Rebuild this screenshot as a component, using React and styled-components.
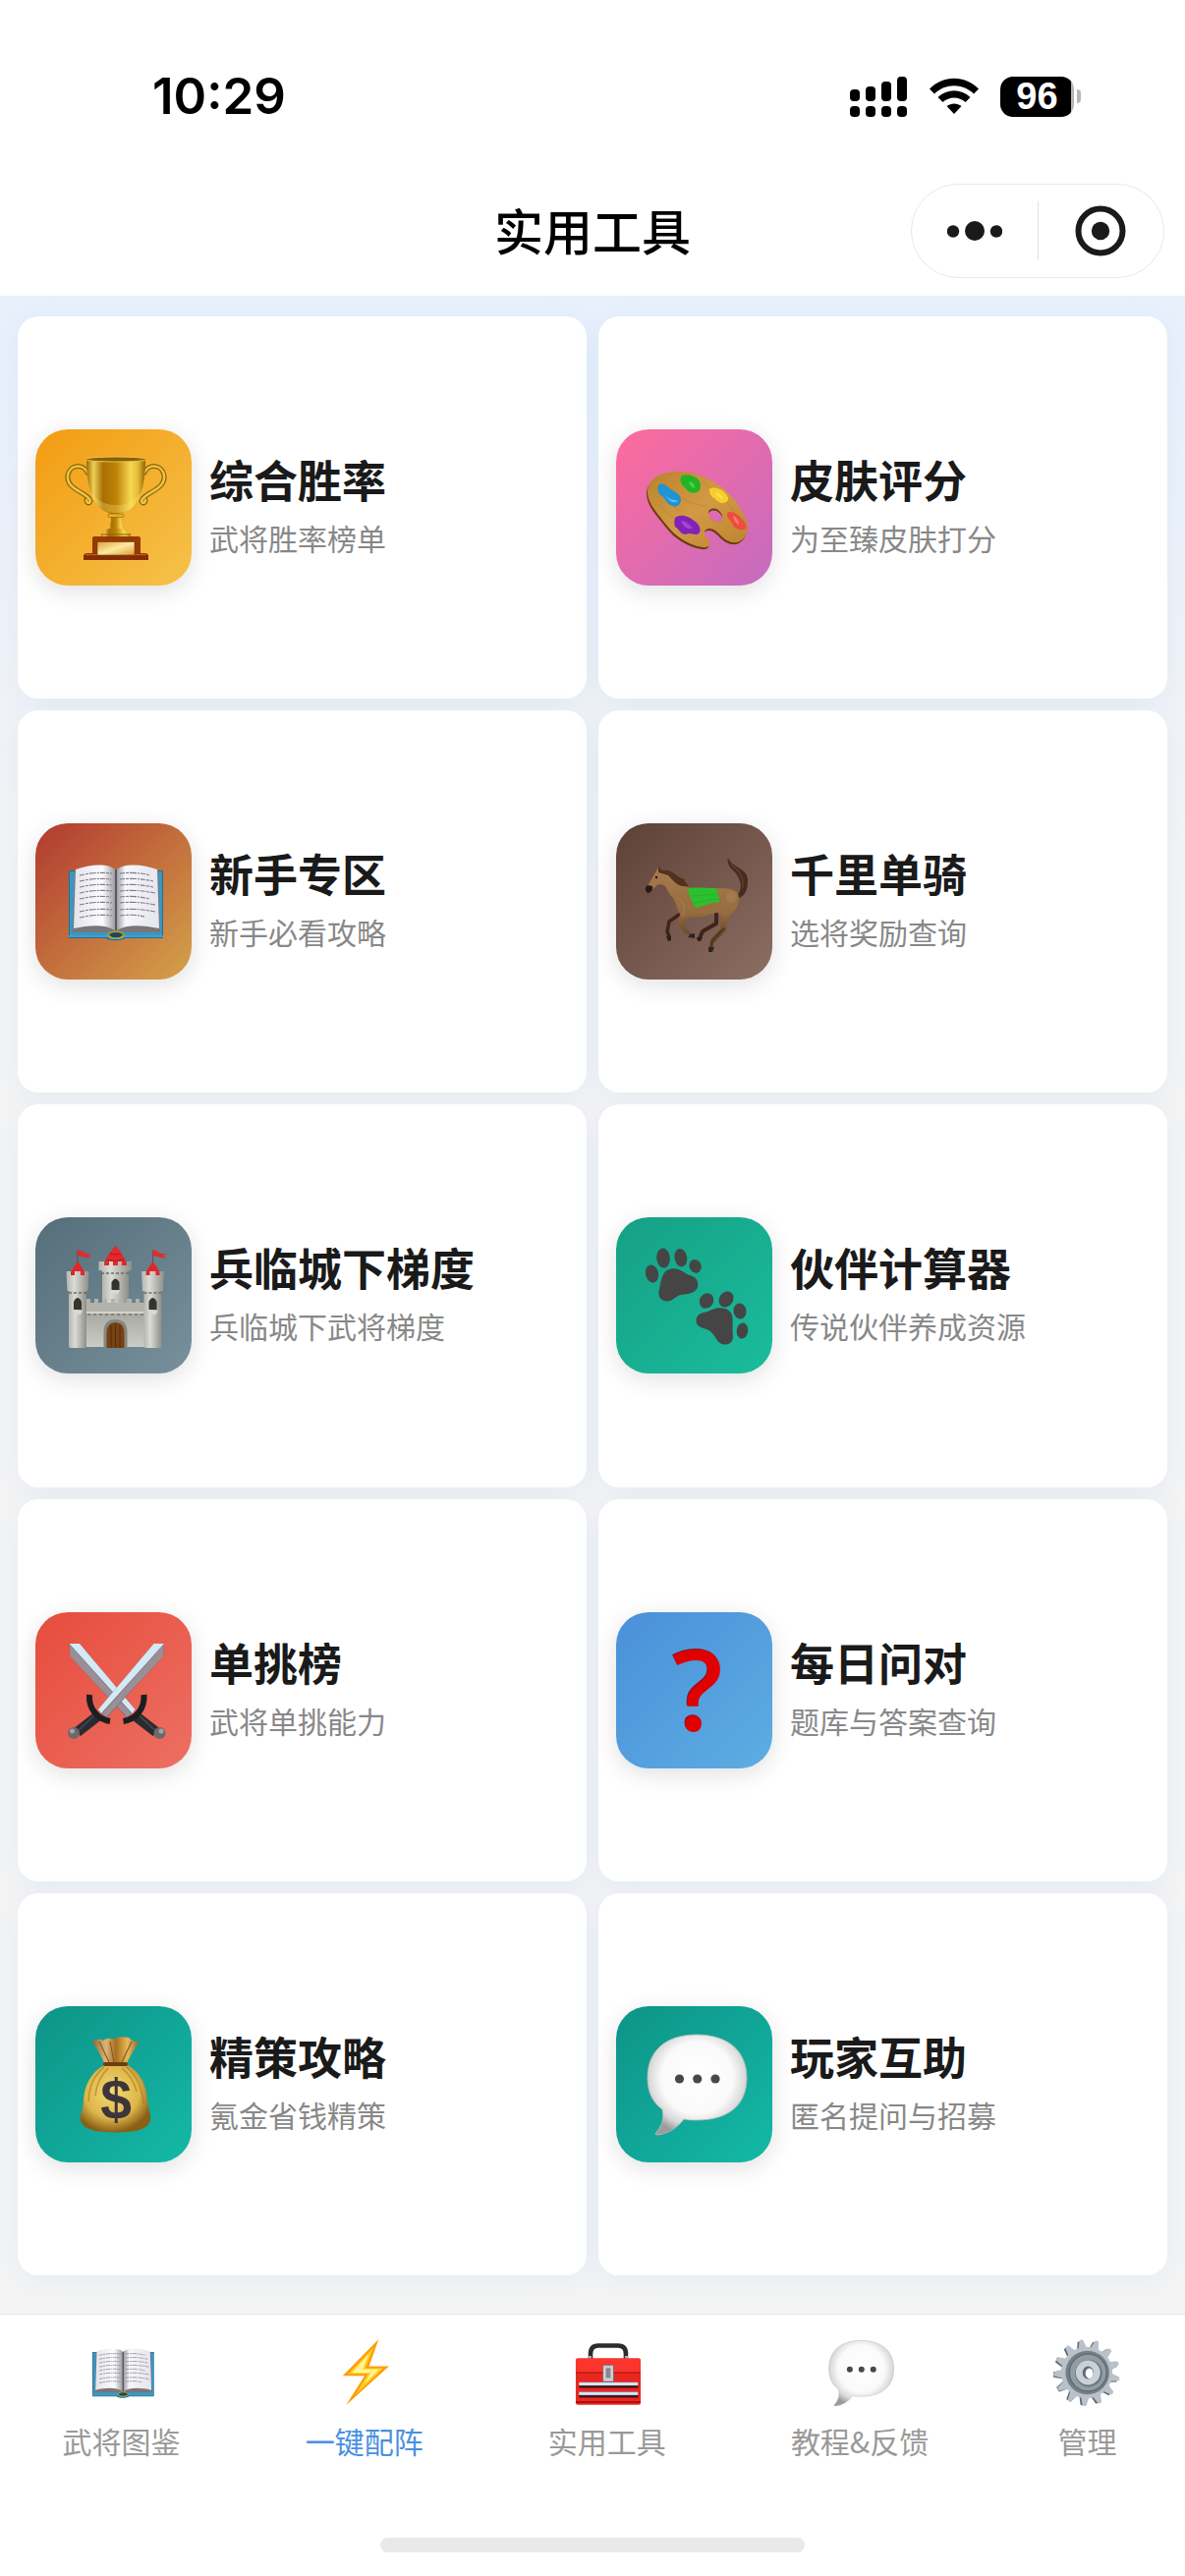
import React from 'react';
import styled, { createGlobalStyle } from 'styled-components';

const GlobalStyle = createGlobalStyle`
    * {
        box-sizing: border-box;
    }
    body {
        margin: 0;
        background: #f4f4f4;
        font-family: 'Noto Sans CJK SC', 'Noto Sans', sans-serif;
    }
`;

const Page = styled.div`
    display: flex;
    flex-direction: column;
    min-height: 100vh;
`;

/* ---------- top ---------- */

const StatusBar = styled.div`
    display: flex;
    align-items: center;
    justify-content: space-between;
    height: 169px;
    padding: 27px 106px 0 155px;
    background: #fff;
`;

const Time = styled.span`
    font: 600 51px/60px Inter, sans-serif;
    color: #000;
`;

const StatusIcons = styled.div`
    display: flex;
    align-items: center;
    gap: 21px;
`;

const Battery = styled.div`
    display: flex;
    align-items: center;
    gap: 3px;
`;

const BatteryLevel = styled.span`
    width: 75px;
    height: 41px;
    border-radius: 13px;
    background: linear-gradient(90deg, #000 72px, #b5b5b5 72px);
    color: #fff;
    text-align: center;
    font: 700 38px/41px 'Liberation Sans', sans-serif;
`;

const BatteryCap = styled.span`
    width: 4px;
    height: 14px;
    border-radius: 0 4px 4px 0;
    background: #b5b5b5;
`;

const Header = styled.header`
    display: grid;
    grid-template-columns: 1fr auto 1fr;
    align-items: center;
    height: 132px;
    padding: 0 21px;
    background: #fff;
`;

const HeaderTitle = styled.h1`
    grid-column: 2;
    margin: 0;
    padding-bottom: 4px;
    font-size: 50px;
    line-height: 72px;
    font-weight: 500;
    color: #000;
`;

const Capsule = styled.div`
    justify-self: end;
    display: flex;
    align-items: center;
    width: 258px;
    height: 96px;
    border: 1px solid #e8e8e8;
    border-radius: 48px;
`;

const CapsuleButton = styled.button`
    flex: 1;
    display: flex;
    align-items: center;
    justify-content: center;
    height: 60px;
    padding: 0;
    border: none;
    background: transparent;
    cursor: pointer;
    & + & {
        border-left: 1px solid #e2e2e2;
    }
`;

/* ---------- tools ---------- */

const Tools = styled.main`
    flex: 1;
    display: grid;
    grid-template-columns: 1fr 1fr;
    grid-auto-rows: 1fr;
    gap: 12px;
    padding: 21px 18px 39px;
    background: linear-gradient(180deg, #e8f0fc 0, #f4f4f4 600px);
`;

const ToolCard = styled.a`
    display: flex;
    align-items: center;
    gap: 18px;
    padding: 18px;
    border-radius: 21px;
    background: #fff;
    box-shadow: 0 6px 30px rgba(74, 144, 226, 0.08);
    text-decoration: none;
`;

const Tile = styled.span`
    display: flex;
    align-items: center;
    justify-content: center;
    flex: none;
    width: 159px;
    height: 159px;
    border-radius: 33px;
    background: linear-gradient(135deg, ${({ from }) => from}, ${({ to }) => to});
    box-shadow: 0 6px 24px rgba(0, 0, 0, 0.12);
`;

const Drawing = styled.svg`
    display: block;
    overflow: visible;
`;

const ToolText = styled.span`
    display: flex;
    flex-direction: column;
    gap: 9px;
    padding-bottom: 4px;
`;

const ToolName = styled.span`
    font-size: 45px;
    line-height: 56px;
    font-weight: 700;
    color: #1a1a1a;
`;

const ToolDesc = styled.span`
    font-size: 30px;
    line-height: 44px;
    color: #888;
`;

/* ---------- tab bar ---------- */

const BottomBar = styled.footer`
    display: flex;
    flex-direction: column;
    justify-content: space-between;
    align-items: center;
    height: 267px;
    padding-bottom: 24px;
    border-top: 1px solid #e6e6e6;
    background: #fff;
`;

const Tabs = styled.nav`
    display: flex;
    justify-content: space-around;
    width: 100%;
    padding: 25px 2px 0 0;
`;

const Tab = styled.a`
    display: flex;
    flex-direction: column;
    align-items: center;
    gap: 13px;
    font-size: 30px;
    line-height: 44px;
    color: ${({ $active }) => ($active ? '#4a90e2' : '#999')};
    text-decoration: none;
`;

const HomeIndicator = styled.div`
    width: 432px;
    height: 15px;
    border-radius: 8px;
    background: #e9e9e9;
`;

/* ---------- drawings, all on a 120 x 120 board ---------- */

const Trophy = () => (
    <g>
        <defs>
            <linearGradient id="gold" x1="0" x2="1">
                <stop offset="0" stopColor="#9a6a06" />
                <stop offset="0.12" stopColor="#f0cf55" />
                <stop offset="0.28" stopColor="#a96f04" />
                <stop offset="0.5" stopColor="#bd8206" />
                <stop offset="0.75" stopColor="#f7d851" />
                <stop offset="0.88" stopColor="#e3b935" />
                <stop offset="1" stopColor="#8f6004" />
            </linearGradient>
            <linearGradient id="plate" x1="0" x2="1" y2="1">
                <stop offset="0" stopColor="#d9a437" />
                <stop offset="0.5" stopColor="#ffe9a0" />
                <stop offset="1" stopColor="#d79d34" />
            </linearGradient>
        </defs>
        <g fill="none" strokeLinecap="round">
            <path d="M33 24C29 15 15 15 13 27C11 42 34 44 36 53C35 56 32 55 32 52M91 24C95 15 109 15 111 27C113 42 90 44 88 53C89 56 92 55 92 52" stroke="#8f6506" strokeWidth="5" />
            <path d="M33 24C29 15 15 15 13 27C11 42 34 44 36 53C35 56 32 55 32 52M91 24C95 15 109 15 111 27C113 42 90 44 88 53C89 56 92 55 92 52" stroke="#eac548" strokeWidth="2.500" />
        </g>
        <path d="M55 64H69C66 70 66 76 72 83H52C58 76 58 70 55 64Z" fill="url(#gold)" />
        <path d="M32 10H92C92 36 87 66 62 66C37 66 32 36 32 10Z" fill="url(#gold)" />
        <path d="M36 42C41 60 50 65 62 65S83 60 88 42C83 52 74 57 62 57S41 52 36 42Z" fill="#ffe676" opacity=".3" />
        <ellipse cx="62" cy="10.500" rx="31" ry="2.500" fill="#8a5f04" stroke="#e8c548" strokeWidth="1" />
        <rect x="54" y="66" width="16" height="3.500" rx="1.700" fill="#e2b02c" stroke="#8a5f04" strokeWidth=".6" />
        <path d="M46 91C46 86 52 85 54 81H70C72 85 78 86 78 91Z" fill="url(#gold)" />
        <path d="M47 87H77" stroke="#8a5f04" strokeWidth="1" />
        <rect x="38" y="89" width="49" height="19" rx="2" fill="#963a08" />
        <path d="M29 113V109Q29 106 33 106H91Q95 106 95 109V113Z" fill="#842d04" />
        <path d="M31 107.500H93" stroke="#c05a1c" strokeWidth="1.500" />
        <rect x="43" y="94.500" width="38" height="13.500" fill="url(#plate)" stroke="#7b3a06" strokeWidth=".6" />
    </g>
);

const Palette = () => (
    <g>
        <defs>
            <linearGradient id="wood" x1="0" y1="0" x2="1" y2="1">
                <stop offset="0" stopColor="#b9822c" />
                <stop offset="0.5" stopColor="#d39a45" />
                <stop offset="1" stopColor="#bd8430" />
            </linearGradient>
        </defs>
        <path transform="translate(-1 2)" fill="#6b3c10" fillRule="evenodd" d="M12 43C13 31 22 24 42 23C62 22 84 33 98 49C108 61 115 74 114 81C113 91 106 96 99 95C88 94 84 81 75 81C68 82 69 87 73 91C78 97 75 101 68 100C54 98 40 89 31 77C20 63 12 55 12 43ZM75 64C76 60 82 59 86 63C91 68 90 72 85 72C80 73 74 68 75 64Z" />
        <path fill="url(#wood)" fillRule="evenodd" d="M12 43C13 31 22 24 42 23C62 22 84 33 98 49C108 61 115 74 114 81C113 91 106 96 99 95C88 94 84 81 75 81C68 82 69 87 73 91C78 97 75 101 68 100C54 98 40 89 31 77C20 63 12 55 12 43ZM74 64C75 60 81 59 85 63C90 68 89 74 84 74C79 75 73 70 74 64Z" />
        <g fill="none" stroke="#a8701f" strokeWidth=".8" opacity=".4">
            <path d="M22 56C34 68 44 75 62 80M28 34C46 52 60 58 72 58M68 34C84 44 94 54 100 64M22 38C30 50 36 58 46 64" />
        </g>
        <path d="M23 37C26 34 30 36 34 40C39 43 46 46 46 52C46 56 42 60 38 58C32 57 30 51 27 48C22 45 22 41 23 37Z" fill="#1f93d4" />
        <path d="M30 47C34 52 38 51 43 53C40 56 34 54 30 47Z" fill="#5fbdec" />
        <path d="M46 28C50 25 56 26 61 29C66 32 67 38 65 42C61 46 55 45 52 42C50 38 44 36 46 28Z" fill="#22b425" />
        <path d="M54 33C58 33 60 36 60 40C57 40 55 37 54 33Z" fill="#4fce45" />
        <path d="M75 41C78 38 85 40 89 43C94 47 96 52 92 54C87 57 83 53 80 50C76 48 75 45 75 41Z" fill="#f7cf28" />
        <path d="M81 44C85 45 88 47 89 51C86 50 83 48 81 44Z" fill="#ffe05a" />
        <path d="M40 70C45 66 53 68 58 72C63 75 67 80 65 85C61 90 56 84 51 87C45 87 44 81 40 79C39 76 39 73 40 70Z" fill="#8322b8" />
        <path d="M46 73C52 74 55 77 58 81C53 82 48 79 46 73Z" fill="#9f48d0" />
        <path d="M93 65C97 62 104 66 108 71C113 77 114 81 110 82C104 83 99 80 98 75C96 72 92 70 93 65Z" fill="#f04c3e" />
        <path d="M99 68C103 70 105 74 105 77C102 76 100 72 99 68Z" fill="#ff8074" />
    </g>
);

const Book = () => (
    <g>
        <defs>
            <linearGradient id="pageL" x1="0" x2="1">
                <stop offset="0" stopColor="#e4e3ea" />
                <stop offset="0.7" stopColor="#fbfbff" />
                <stop offset="1" stopColor="#9e9da6" />
            </linearGradient>
            <linearGradient id="pageR" x1="0" x2="1">
                <stop offset="0" stopColor="#9e9da6" />
                <stop offset="0.2" stopColor="#f6f6fb" />
                <stop offset="1" stopColor="#e6e5ee" />
            </linearGradient>
        </defs>
        <path d="M14 28H110V97H71C69 100 54 100 52 97H14Z" fill="#1f6f97" />
        <path d="M15 29H109V94H15Z" fill="#3c96c2" />
        <path d="M14 95H54C56 98 68 98 70 95H110" fill="none" stroke="#4fb0dc" strokeWidth="1.500" />
        <path d="M20 28L18 88V91H56C60 92 64 92 68 91H107V88L105 28Z" fill="#77777a" />
        <path d="M54 94C56 89 68 89 70 94C66 98 58 98 54 94Z" fill="#134a66" stroke="#c0a015" strokeWidth="1.500" />
        <path d="M21 27C34 22 54 20 61 27V89C50 82 34 84 19 87Z" fill="url(#pageL)" />
        <path d="M104 27C91 22 71 20 63 27V89C74 82 90 84 106 87Z" fill="url(#pageR)" />
        <path d="M62 27V89" stroke="#55555c" strokeWidth="1.800" />
        <g fill="none" stroke="#7d7d88" strokeWidth="1.100" strokeDasharray="5 1 3 1 7 1 2 1">
            <path d="M25 33Q42 29 58 31M25 39Q42 35 57 37M25 45Q42 41 58 43M25 51Q42 47 58 49M25 57Q42 53 57 55M25 63Q42 59 58 61M25 70Q42 66 58 68M25 76Q42 72 58 74" />
            <path d="M66 31Q82 29 97 33M66 37Q82 35 100 39M66 43Q82 41 100 45M66 49Q82 47 102 51M66 55Q82 53 96 57M66 61Q82 59 102 63M66 68Q82 66 102 70M66 74Q80 72 91 75" />
        </g>
    </g>
);

const Horse = () => (
    <g strokeLinejoin="round" strokeLinecap="round">
        <defs>
            <linearGradient id="coat" x1="0" y1="0" x2="0" y2="1">
                <stop offset="0" stopColor="#a87a4c" />
                <stop offset="0.55" stopColor="#966d3e" />
                <stop offset="1" stopColor="#50311d" />
            </linearGradient>
        </defs>
        <path d="M103 54C111 44 105 33 98 27C94 23 93 19 94 15C97 25 114 25 114 38C114 48 111 54 105 56Z" fill="#4a2b20" />
        <path d="M97 22C105 28 110 34 109 45" fill="none" stroke="#66402f" strokeWidth="1.200" />
        <g fill="none" stroke="#40241a" strokeWidth="3.500">
            <path d="M44 73L34 80L32 90L34 95" />
            <path d="M82 69L82 82L68 90L65 97" strokeWidth="4" />
        </g>
        <path d="M31 95L36 95L36 99L33 100ZM62 96L68 96L66 100L63 100Z" fill="#252020" />
        <path d="M23 25L27 28C37 29 44 35 49 43C58 49 68 46 82 46C96 46 105 47 105 56C105 66 99 70 94 76L92 89L79 102L78 108L75 108L76 99L86 87L87 74C84 71 83 70 79 72C71 75 61 76 57 76C52 76 50 78 48 81L54 90L58 94L50 92L43 82C43 78 45 75 45 72C41 67 42 61 37 55C33 51 32 46 29 43L24 42C20 43 18 48 14 50C10 50 10 46 12 44L19 32Z" fill="url(#coat)" />
        <path d="M90 87L78 99L77 105" fill="none" stroke="#56351f" strokeWidth="2" />
        <path d="M12 43L17 44C18 48 15 50 13 51C9 50 9 45 12 43Z" fill="#2a1815" />
        <path d="M23 24L27 28C38 26 42 36 50 37C48 38 54 43 54 44C43 46 38 38 33 33L23 30Z" fill="#54301f" />
        <path d="M43 57C48 57 51 67 48 75" fill="none" stroke="#b98e5e" strokeWidth="1.200" opacity=".5" />
        <ellipse cx="97" cy="55" rx="5" ry="6" fill="#bd9066" opacity=".3" />
        <circle cx="21" cy="35" r="1.200" fill="#1c1010" />
        <path d="M53 46C63 45 73 46 81 46C84 50 85 55 85 60C77 60 70 64 61 66C57 59 54 54 53 46Z" fill="#2cc030" />
        <path d="M57 54C66 54 75 52 83 52M60 61C68 60 76 57 84 57" fill="none" stroke="#1fa524" strokeWidth="1" opacity=".5" />
        <path d="M55 93L60 92L60 97L53 96ZM74 106L80 106L78 111L74 111Z" fill="#2b2524" />
    </g>
);

const SideTower = ({ x }) => (
    <g transform={`translate(${x} 0)`}>
        <path d="M0 14V28" stroke="#555" strokeWidth="1" />
        <path d="M0 13C5 13 5 18 14 17L11 19L13 21C7 22 4 19 0 19Z" fill="#e5292d" />
        <rect x="-9" y="54" width="18" height="59" rx="2" fill="url(#stone)" />
        <path d="M0 25Q6 33 8 39H-8Q-6 33 0 25Z" fill="#e0262a" />
        <path d="M-11.500 35H-7V39H-3V35H3V39H7V35H11.500L10.500 55H-10.500Z" fill="url(#stone)" />
        <path d="M-9 57H9" stroke="#6b6d65" strokeWidth="1.500" strokeDasharray="3 2" />
        <path d="M-4 74V66Q0 58 4 66V74Z" fill="#35332b" />
        <path d="M-5 75H5L3 79H-3Z" fill="#d8d9d2" />
    </g>
);

const Castle = () => (
    <g>
        <defs>
            <linearGradient id="stone" x1="0" x2="1">
                <stop offset="0" stopColor="#b3b5af" />
                <stop offset="0.35" stopColor="#dcdcd6" />
                <stop offset="1" stopColor="#8d8f87" />
            </linearGradient>
            <linearGradient id="wall" x1="0" y1="0" x2="0" y2="1">
                <stop offset="0" stopColor="#a6a8a0" />
                <stop offset="1" stopColor="#cbccc5" />
            </linearGradient>
        </defs>
        <rect x="48" y="34" width="27" height="40" fill="url(#stone)" />
        <path d="M61.500 9Q70 18 73.500 29V32H49.500V29Q53 18 61.500 9Z" fill="#e3272b" />
        <path d="M56 17Q62 19 67 17M52 23Q62 26 71 23" fill="none" stroke="#a91418" strokeWidth=".8" />
        <path d="M44.500 25H50V29H55V25H59V29H64V25H68V29H73V25H78V34Q62 37 44.500 34Z" fill="url(#stone)" />
        <path d="M47 37H77" stroke="#6b6d65" strokeWidth="1.500" strokeDasharray="3 2" />
        <path d="M57.500 54V46Q61.500 39 65.500 46V54Z" fill="#34322b" />
        <path d="M57 54H66L64 58H59Z" fill="#d8d9d2" />
        <path d="M32 63H36V67H40V63H44V67H49V63H53V67H57V63H61V67H65V63H69V67H73V63H78V67H82V63H86V67H91V77H32Z" fill="#b1b3aa" />
        <rect x="32" y="76" width="59" height="36" fill="url(#wall)" />
        <path d="M32 77H91" stroke="#e2e2dd" strokeWidth="1.500" />
        <path d="M33 79H91" stroke="#74766e" strokeWidth="1.500" strokeDasharray="3 3" />
        <path d="M49.500 113V96Q50 84 61.500 84T73.500 96V113Z" fill="#85877f" />
        <path d="M52.500 113V97Q53 87 61.500 87T70.500 97V113Z" fill="#764214" />
        <path d="M57 90V113M61.500 88V113M66 90V113" stroke="#512a09" strokeWidth=".8" />
        <SideTower x={23} />
        <SideTower x={99.5} />
    </g>
);

const Paws = () => (
    <g fill="#454545">
        <ellipse cx="16.500" cy="37.500" rx="6.500" ry="9.200" transform="rotate(-12 16.500 37.500)" />
        <ellipse cx="28" cy="21.500" rx="6.800" ry="10" transform="rotate(-5 28 21.500)" />
        <ellipse cx="45.800" cy="21.200" rx="6.300" ry="9.300" transform="rotate(-10 45.800 21.200)" />
        <ellipse cx="60.600" cy="29.800" rx="6" ry="7" transform="rotate(-25 60.600 29.800)" />
        <path d="M36 32.500C45 31 49 37 55 39C63 41 64 47 63 51C61 58 52 58 46 59C40 60 38 66 31 65.500C25 65 22 60 24 53C26 46 26 34 36 32.500Z" />
        <ellipse cx="72" cy="65" rx="7" ry="8" transform="rotate(30 72 65)" />
        <ellipse cx="92" cy="63.500" rx="7" ry="8.500" transform="rotate(35 92 63.500)" />
        <ellipse cx="106" cy="75.500" rx="6.500" ry="8" transform="rotate(-8 106 75.500)" />
        <ellipse cx="108.500" cy="95.500" rx="5.800" ry="8" transform="rotate(8 108.500 95.500)" />
        <path d="M83 72.500C91 71 98 75 98.500 82C99 89 98 95 99 101C99 107 95 110 90 109.500C83 109 82 102 77 97C72 92 65 94 62 88C60 82 64 78 69 77C75 76 78 73 83 72.500Z" />
    </g>
);

const Sword = () => (
    <g>
        <path d="M100.500 13L111 13L110 26L52 89L44 80Z" fill="#776a70" />
        <path d="M100.500 13L111 13L47 84L44 80Z" fill="#d3e9f6" />
        <path d="M110.500 14L110 26L52 88L48 84Z" fill="#9a8f97" />
        <path d="M41 82L49 89L26 107L18 100Z" fill="#292b30" />
        <path d="M41 85L24 101" stroke="#484a52" strokeWidth="1.500" />
        <path d="M35 65C34 80 44 90 56 92" fill="none" stroke="#1d1e21" strokeWidth="6" />
        <circle cx="19" cy="104" r="6" fill="#6c686c" />
        <circle cx="17.500" cy="102" r="2.500" fill="#a5a1a5" />
    </g>
);

const Swords = () => (
    <g>
        <g transform="translate(125.500 0) scale(-1 1)">
            <Sword />
        </g>
        <Sword />
    </g>
);

const Question = () => (
    <g fontFamily="Open Sans" fontWeight="600" fontSize="114" textAnchor="middle">
        <text x="62" y="101" fill="#8c1220">?</text>
        <text x="63" y="102" fill="#e00000">?</text>
    </g>
);

const MoneyBag = () => (
    <g>
        <defs>
            <radialGradient id="sack" cx="0.45" cy="0.4" r="0.6">
                <stop offset="0" stopColor="#f3dc72" />
                <stop offset="0.65" stopColor="#ddb54a" />
                <stop offset="1" stopColor="#8a5f16" />
            </radialGradient>
            <linearGradient id="tie" x1="0" x2="1">
                <stop offset="0" stopColor="#8d6530" />
                <stop offset="0.3" stopColor="#dcb678" />
                <stop offset="0.5" stopColor="#a56f1f" />
                <stop offset="0.75" stopColor="#e9b85a" />
                <stop offset="1" stopColor="#8d6530" />
            </linearGradient>
        </defs>
        <path d="M50 39C46 30 43 24 37.500 17Q45 13 49 16Q54 12 59 15Q64 11 75 13L80 17L86 16C81 25 76 32 73 39Z" fill="url(#tie)" />
        <path d="M45 17L55 38M56 17L60 38M78 17L68 38" stroke="#8b5b20" strokeWidth="1.200" />
        <path d="M50 41H74C87 48 93 62 94 76C95 88 98 90 97 97C95 107 80 109.500 62 109.500S28 107 26 97C25 90 29 87 29 76C30 61 37 48 50 41Z" fill="url(#sack)" />
        <path d="M50 43C38 53 35 64 34 78M54 44C46 52 42 62 41 72M73 43C85 54 89 66 90 80M68 44C77 51 81 60 83 68" fill="none" stroke="#a97718" strokeWidth="1.500" opacity=".6" />
        <rect x="49" y="38" width="25" height="4" rx="2" fill="#6d3c12" />
        <text x="62" y="96" fontFamily="Liberation Sans" fontWeight="700" fontSize="57" textAnchor="middle" fill="#3d353a">$</text>
    </g>
);

const Bubble = () => (
    <g>
        <defs>
            <radialGradient id="bubble" cx="0.5" cy="0.43" r="0.58">
                <stop offset="0" stopColor="#fff" />
                <stop offset="0.62" stopColor="#fafafa" />
                <stop offset="0.84" stopColor="#d8d8d8" />
                <stop offset="1" stopColor="#9c9c9c" />
            </radialGradient>
        </defs>
        <path d="M62 10C93 10 113 26 113 54S94 97 62 97C57 97 53 97 49 96C42 105 33 111 22 112C19 112 20 110 22 108C27 102 29 95 27 86C17 79 12 68 12 54C12 26 31 10 62 10Z" fill="url(#bubble)" stroke="#bdbdbd" strokeWidth=".8" />
        <g fill="#484848">
            <circle cx="44.500" cy="55" r="4.600" />
            <circle cx="62.700" cy="55" r="4.600" />
            <circle cx="81" cy="55" r="4.600" />
        </g>
    </g>
);

const Bolt = () => (
    <g strokeLinejoin="round">
        <path d="M82 8L26 65H60L31 111L98 50H67Z" fill="#ff9d0a" />
        <path d="M74 21L35 62H66L46 94L89 53H61Z" fill="#ffd426" />
        <path d="M67 31L41 60H70L61 76L82 55H57Z" fill="#fff59a" />
    </g>
);

const Toolbox = () => (
    <g>
        <path d="M34 40V31Q34 18 46 18H77Q89 18 89 31V40" fill="none" stroke="#2c2c2e" strokeWidth="7" />
        <path d="M33 34V39M90 34V39" stroke="#9cb5ca" strokeWidth="5" />
        <rect x="11" y="38" width="101" height="72" rx="3" fill="#e9271f" />
        <rect x="11" y="38" width="101" height="22" rx="3" fill="#fb352c" />
        <path d="M11 60H112" stroke="#9d120d" strokeWidth="1.500" />
        <path d="M11 106H112" stroke="#ac120c" strokeWidth="3" />
        <g>
            <rect x="16" y="75" width="92" height="9" fill="#48151a" />
            <rect x="16" y="75" width="92" height="5" fill="#cfe5fa" />
            <rect x="16" y="90" width="92" height="9" fill="#48151a" />
            <rect x="16" y="90" width="92" height="5" fill="#cfe5fa" />
        </g>
        <rect x="53" y="48" width="17" height="26" fill="#ccc6ce" stroke="#61545b" />
        <rect x="57" y="52" width="9" height="17" rx="2" fill="#8d858c" stroke="#f1edf1" />
    </g>
);

const TEETH = 13;
const toothAngles = Array.from({ length: TEETH }, (_, i) => (i * 360) / TEETH + 18);

const Gear = () => (
    <g>
        <g fill="#59666c" transform="translate(-2 1)">
            {toothAngles.map((a) => (
                <path key={a} d="M53 24L56 10H64L67 24Z" transform={`rotate(${a} 60 60)`} />
            ))}
        </g>
        <g fill="#b9c1ca">
            {toothAngles.map((a) => (
                <path key={a} d="M53 24L57 9Q60 7 63 9L67 24Z" transform={`rotate(${a} 60 60)`} />
            ))}
        </g>
        <circle cx="60" cy="60" r="36" fill="none" stroke="#b9c1ca" strokeWidth="8" />
        <circle cx="61" cy="60" r="34" fill="#747f86" />
        <circle cx="62" cy="60" r="29" fill="#929da3" stroke="#5f6a70" strokeWidth="2" />
        <circle cx="63" cy="61" r="21" fill="#6b757c" />
        <circle cx="62" cy="60" r="19" fill="#c9d0d9" />
        <ellipse cx="62" cy="60" rx="8.500" ry="10" fill="#616a70" />
        <ellipse cx="64" cy="61" rx="6" ry="8" fill="#fff" />
    </g>
);

const Signal = () => (
    <svg width="59" height="41" viewBox="0 0 59 41" aria-hidden="true">
        <rect x="0" y="13" width="10" height="12" rx="4" />
        <rect x="16" y="10" width="10" height="15" rx="4" />
        <rect x="32" y="5" width="10" height="20" rx="4" />
        <rect x="48" y="0" width="10" height="25" rx="4" />
        <rect x="0" y="30" width="10" height="11" rx="4" />
        <rect x="16" y="30" width="10" height="11" rx="4" />
        <rect x="32" y="30" width="10" height="11" rx="4" />
        <rect x="48" y="30" width="10" height="11" rx="4" />
    </svg>
);

const Wifi = () => (
    <svg width="52" height="38" viewBox="0 0 52 38" aria-hidden="true">
        <path d="M1 11.500C15-3 37-3 51 11.500L46 16.500C35 5.500 17 5.500 6 16.500Z" />
        <path d="M9.500 20C19 11 33 11 42.500 20L37.500 25C31 19 21 19 14.500 25Z" />
        <path d="M18.500 29C23 25.500 29 25.500 33.500 29L26 37Z" />
    </svg>
);

const tools = [
    { name: '综合胜率', desc: '武将胜率榜单', icon: Trophy, from: '#f39c12', to: '#f5c24a' },
    { name: '皮肤评分', desc: '为至臻皮肤打分', icon: Palette, from: '#ff6b9d', to: '#c46bc0' },
    { name: '新手专区', desc: '新手必看攻略', icon: Book, from: '#b23a30', to: '#d4a24a' },
    { name: '千里单骑', desc: '选将奖励查询', icon: Horse, from: '#5d4037', to: '#8d6e63' },
    { name: '兵临城下梯度', desc: '兵临城下武将梯度', icon: Castle, from: '#546e7a', to: '#78909c' },
    { name: '伙伴计算器', desc: '传说伙伴养成资源', icon: Paws, from: '#16a085', to: '#1abc9c' },
    { name: '单挑榜', desc: '武将单挑能力', icon: Swords, from: '#e74c3c', to: '#ec7063' },
    { name: '每日问对', desc: '题库与答案查询', icon: Question, from: '#4a90d9', to: '#5dade2' },
    { name: '精策攻略', desc: '氪金省钱精策', icon: MoneyBag, from: '#0d9488', to: '#14b8a6' },
    { name: '玩家互助', desc: '匿名提问与招募', icon: Bubble, from: '#0d9488', to: '#14b8a6' },
];

const tabs = [
    { label: '武将图鉴', icon: Book },
    { label: '一键配阵', icon: Bolt, active: true },
    { label: '实用工具', icon: Toolbox },
    { label: '教程&反馈', icon: Bubble },
    { label: '管理', icon: Gear },
];

const Tool = ({ name, desc, icon: Icon, from, to }) => (
    <ToolCard href="#">
        <Tile from={from} to={to}>
            <Drawing width="120" height="120" viewBox="0 0 120 120" aria-hidden="true">
                <Icon />
            </Drawing>
        </Tile>
        <ToolText>
            <ToolName>{name}</ToolName>
            <ToolDesc>{desc}</ToolDesc>
        </ToolText>
    </ToolCard>
);

const App = () => (
    <Page>
        <GlobalStyle />
        <StatusBar>
            <Time>10:29</Time>
            <StatusIcons>
                <Signal />
                <Wifi />
                <Battery>
                    <BatteryLevel>96</BatteryLevel>
                    <BatteryCap />
                </Battery>
            </StatusIcons>
        </StatusBar>
        <Header>
            <HeaderTitle>实用工具</HeaderTitle>
            <Capsule>
                <CapsuleButton aria-label="更多">
                    <svg width="56" height="20" viewBox="0 0 56 20" fill="#1a1a1a">
                        <circle cx="6" cy="10.500" r="6.200" />
                        <circle cx="28" cy="10" r="10" />
                        <circle cx="50" cy="10.500" r="6.200" />
                    </svg>
                </CapsuleButton>
                <CapsuleButton aria-label="关闭">
                    <svg width="52" height="52" viewBox="0 0 52 52">
                        <circle cx="26" cy="26" r="22.500" fill="none" stroke="#1a1a1a" strokeWidth="6" />
                        <circle cx="26" cy="26" r="9.200" fill="#1a1a1a" />
                    </svg>
                </CapsuleButton>
            </Capsule>
        </Header>
        <Tools>
            {tools.map((tool) => (
                <Tool key={tool.name} {...tool} />
            ))}
        </Tools>
        <BottomBar>
            <Tabs>
                {tabs.map(({ label, icon: Icon, active }) => (
                    <Tab key={label} href="#" $active={active}>
                        <Drawing width="68" height="68" viewBox="8 8 104 104" aria-hidden="true">
                            <Icon />
                        </Drawing>
                        {label}
                    </Tab>
                ))}
            </Tabs>
            <HomeIndicator />
        </BottomBar>
    </Page>
);

export default App;
